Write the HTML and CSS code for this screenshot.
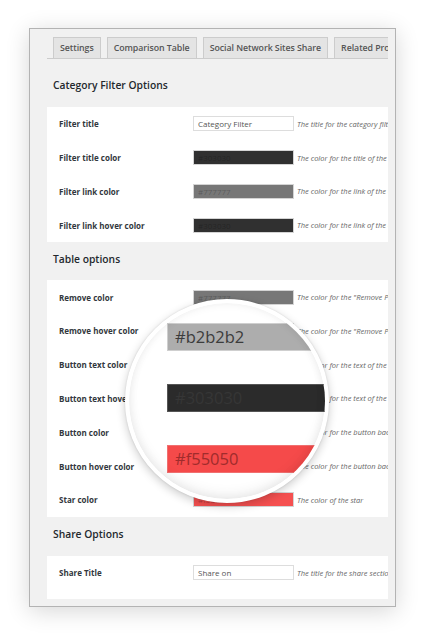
FILE: index.html
```html
<!DOCTYPE html>
<html>
<head>
<meta charset="utf-8">
<link rel="stylesheet" href="styles.css">
</head>
<body>
<div class="window">
  <div class="clip">
    <div class="tabs">
      <span class="tab">Settings</span>
      <span class="tab">Comparison Table</span>
      <span class="tab">Social Network Sites Share</span>
      <span class="tab">Related Products</span>
    </div>

    <h2 class="heading first">Category Filter Options</h2>
    <div class="panel">
      <div class="row"><span class="label">Filter title</span><span class="field">Category Filter</span><span class="desc">The title for the category filter</span></div>
      <div class="row"><span class="label">Filter title color</span><span class="field swatch dark">#303030</span><span class="desc">The color for the title of the category filter</span></div>
      <div class="row"><span class="label">Filter link color</span><span class="field swatch grey">#777777</span><span class="desc">The color for the link of the category filter</span></div>
      <div class="row"><span class="label">Filter link hover color</span><span class="field swatch dark">#303030</span><span class="desc">The color for the link of the category filter on hover</span></div>
    </div>

    <h2 class="heading">Table options</h2>
    <div class="panel">
      <div class="row"><span class="label">Remove color</span><span class="field swatch grey">#777777</span><span class="desc">The color for the "Remove Product" link</span></div>
      <div class="row"><span class="label">Remove hover color</span><span class="field swatch light">#b2b2b2</span><span class="desc">The color for the "Remove Product" link on hover</span></div>
      <div class="row"><span class="label">Button text color</span><span class="field swatch">#ffffff</span><span class="desc">The color for the text of the button</span></div>
      <div class="row"><span class="label">Button text hover</span><span class="field swatch dark">#303030</span><span class="desc">The color for the text of the button on hover</span></div>
      <div class="row"><span class="label">Button color</span><span class="field swatch">#ffffff</span><span class="desc">The color for the button background</span></div>
      <div class="row"><span class="label">Button hover color</span><span class="field swatch red">#f55050</span><span class="desc">The color for the button background on hover</span></div>
      <div class="row"><span class="label">Star color</span><span class="field swatch red">#f55050</span><span class="desc">The color of the star</span></div>
    </div>

    <h2 class="heading share">Share Options</h2>
    <div class="panel last">
      <div class="row"><span class="label">Share Title</span><span class="field">Share on</span><span class="desc">The title for the share section</span></div>
    </div>
  </div>

  <div class="lens">
    <div class="lens-field light">#b2b2b2</div>
    <div class="lens-field dark">#303030</div>
    <div class="lens-field red">#f55050</div>
  </div>
</div>
</body>
</html>
```
FILE: styles.css
```css
* { box-sizing: border-box; }

html, body {
  margin: 0;
  padding: 0;
  background: #ffffff;
}

body {
  font-family: "Open Sans", "Noto Sans", sans-serif;
  color: #23282d;
  width: 422px;
  height: 636px;
  overflow: hidden;
}

.window {
  position: relative;
  margin: 28px 0 0 29px;
  width: 367px;
  height: 579px;
  border: 1px solid #b3b3b3;
  background: #f1f1f1;
  box-shadow: 0 4px 22px rgba(0, 0, 0, 0.16);
  padding: 8px 7px 0 17px;
}

.clip {
  height: 100%;
  overflow: hidden;
}

.tabs {
  display: flex;
  gap: 6px;
  padding-left: 6px;
  border-bottom: 1px solid #cccccc;
  height: 22px;
}

.tab {
  flex-shrink: 0;
  white-space: nowrap;
  height: 21px;
  line-height: 20px;
  padding: 0 6px;
  border: 1px solid #cccccc;
  border-bottom: none;
  background: #e4e4e4;
  color: #555555;
  font-size: 8.8px;
  font-weight: 600;
  letter-spacing: -0.05px;
}

.heading {
  margin: 10px 0 14px 6px;
  font-size: 10.3px;
  line-height: 14px;
  font-weight: 600;
  color: #23282d;
}

.heading.first {
  margin-top: 19px;
  margin-bottom: 15px;
}

.heading.share {
  margin-bottom: 15px;
}

.panel {
  background: #ffffff;
}

.panel.last {
  padding-bottom: 9px;
}

.row {
  display: grid;
  grid-template-columns: 134px 101px 1fr;
  align-items: center;
  height: 33.8px;
  padding-left: 12px;
}

.label {
  font-size: 8px;
  font-weight: 700;
  color: #32373c;
  white-space: nowrap;
}

.field {
  height: 15px;
  border: 1px solid #dddddd;
  background: #ffffff;
  font-size: 8px;
  line-height: 13px;
  padding-left: 4px;
  color: #555555;
  white-space: nowrap;
  overflow: hidden;
}

.swatch {
  border-color: #d4d4d4;
  color: rgba(0, 0, 0, 0.25);
  background: #ffffff;
}

.swatch.dark { background: #303030; }
.swatch.grey { background: #777777; }
.swatch.light { background: #b2b2b2; }
.swatch.red { background: #f55050; }

.desc {
  margin-left: 3px;
  font-size: 7.5px;
  font-style: italic;
  color: #666666;
  white-space: nowrap;
  overflow: hidden;
}

/* magnifier overlay */
.lens {
  position: absolute;
  left: 95px;
  top: 270px;
  width: 204px;
  height: 204px;
  border-radius: 50%;
  border: 4px solid #ffffff;
  background: #ffffff;
  overflow: hidden;
  box-shadow: 0 3px 10px rgba(0, 0, 0, 0.2), 0 0 2px rgba(0, 0, 0, 0.12);
  display: flex;
  flex-direction: column;
  gap: 33px;
  padding: 20px 0 0 38px;
}

.lens::after {
  content: "";
  position: absolute;
  inset: 0;
  border-radius: 50%;
  box-shadow: inset 0 0 10px rgba(0, 0, 0, 0.07), inset 0 -6px 12px rgba(0, 0, 0, 0.05);
  pointer-events: none;
}

.lens-field {
  flex-shrink: 0;
  width: 220px;
  height: 28px;
  border: 1px solid #cfcfcf;
  font-size: 16.5px;
  line-height: 26px;
  padding-left: 7px;
}

.lens-field.light {
  background: #adadad;
  color: #3c3c3c;
}

.lens-field.dark {
  background: #2b2b2b;
  border-color: #555555;
  color: #363636;
}

.lens-field.red {
  background: #f54a4a;
  border-color: #f07070;
  color: #a02c2c;
}
```
